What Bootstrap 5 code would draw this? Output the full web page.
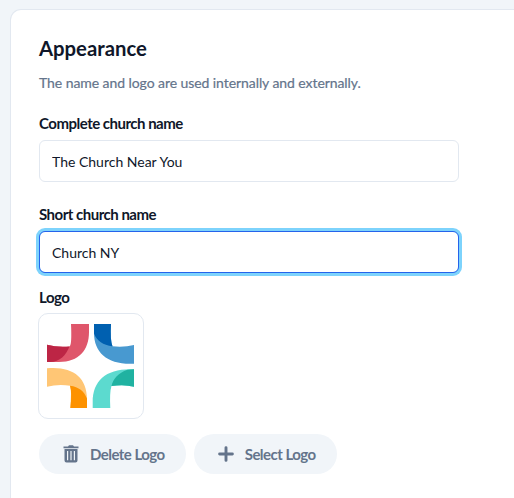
<!DOCTYPE html>
<html lang="en">
<head>
<meta charset="utf-8">
<meta name="viewport" content="width=device-width, initial-scale=1">
<title>Appearance</title>
<link href="https://cdn.jsdelivr.net/npm/bootstrap@5.3.0/dist/css/bootstrap.min.css" rel="stylesheet">
<style>
body{background:#f1f5f9;color:#0f172a;font-family:Lato,sans-serif;font-size:14px;line-height:20px}
.page{padding:10px 0 0 11px;height:498px}
.panel{height:488px;border:0;border-radius:10px 0 0 0;padding:24px 28px 0;color:#0f172a;box-shadow:0 0 0 1px #e2e8f0}
.panel-title{font-size:20.3px;line-height:28px;font-weight:700;margin:0 0 11px}
.hint{color:#64748b;line-height:20px;margin-bottom:20px;letter-spacing:-.07px;-webkit-text-stroke:.2px #64748b}
.form-label{font-size:15px;letter-spacing:-.5px;font-weight:700;line-height:20px;margin-bottom:7px;display:block}
.form-control{width:420px;height:42px;border:1px solid #e2e8f0;border-radius:6px;padding:0 12px;font-size:14px;color:#0f172a;margin-bottom:22px}
.form-control.active-field{border-color:#2563eb;box-shadow:0 0 0 3px #7dd3fc;margin-bottom:14px}
.logo-label{margin-bottom:6px}
.logo-box{width:106px;height:106px;border:1px solid #e2e8f0;border-radius:10px;margin:0 0 15px -1px}
.pill{--bs-btn-bg:#f1f5f9;--bs-btn-color:#64748b;--bs-btn-border-width:0;height:40px;border-radius:20px;padding:0 21px 0 24px;font-size:15px;letter-spacing:-.53px;font-weight:700;gap:11px}
</style>
</head>
<body>
<main class="page">
<section class="card panel">
<h1 class="panel-title">Appearance</h1>
<p class="hint">The name and logo are used internally and externally.</p>
<label class="form-label" for="full">Complete church name</label>
<input class="form-control" id="full" value="The Church Near You">
<label class="form-label" for="short">Short church name</label>
<input class="form-control active-field" id="short" value="Church NY">
<div class="form-label logo-label">Logo</div>
<div class="logo-box overflow-hidden">
<svg class="d-block" width="104" height="104" viewBox="39 314 104 104" role="img" aria-label="Church logo">
<path fill="#df566b" d="M71 324H89V332C89 350 79 362 59 362H47V344.8Q57 347.5 69.5 346.5Q72 345 71 324Z"/>
<path fill="#bd2545" d="M47 344.8Q57 347.5 69.5 346.5C66 355 60 362 50 362H47Z"/>
<path fill="#4899d0" d="M94 324H111Q110 340 112.5 346.3Q124 347.5 134 345V363.7C108 365 94 353 94 333Z"/>
<path fill="#0060b0" d="M94 324H111Q110 340 112.5 346.3C103 345 97 341 94 333.5Z"/>
<path fill="#ffc675" d="M47 368.3C72 366 87 377 87 399V408H70Q72 392 70 385.7Q58 384 47 386.7Z"/>
<path fill="#fd9200" d="M70 385.7C79 387 84 391 87 398.5V408H70.5Q72 392 70 385.7Z"/>
<path fill="#5cdacf" d="M134 369.3C107 368 92.7 380 92.7 402V408H110.3Q109.5 392 111.5 386Q124 384 134 386.7Z"/>
<path fill="#20b2a1" d="M111.5 386C113 379 118 373 127.5 369.7L134 369.3V386.7Q124 384 111.5 386Z"/>
</svg>
</div>
<div class="d-flex gap-2">
<button class="btn pill d-flex align-items-center" type="button">
<svg width="16" height="18" viewBox="0 0 16 18" aria-hidden="true"><path fill="#64748b" fill-rule="evenodd" d="M.5 1.5H5L6 .3H10L11 1.5H15.5V3.2H.5ZM1.5 4H14.5V15.5Q14.5 17.5 12.5 17.5H3.5Q1.5 17.5 1.5 15.5ZM4 6V15.2H5.2V6ZM7.4 6V15.2H8.6V6ZM10.8 6V15.2H12V6Z"/></svg>
<span>Delete Logo</span></button>
<button class="btn pill d-flex align-items-center" type="button">
<svg width="16" height="18" viewBox="0 0 16 18" aria-hidden="true"><path d="M8 2.6V15.4M1.6 9H14.4" stroke="#64748b" stroke-width="2.9" stroke-linecap="round"/></svg>
<span>Select Logo</span></button>
</div>
</section>
</main>
<script src="https://cdn.jsdelivr.net/npm/bootstrap@5.3.0/dist/js/bootstrap.bundle.min.js"></script>
</body>
</html>
